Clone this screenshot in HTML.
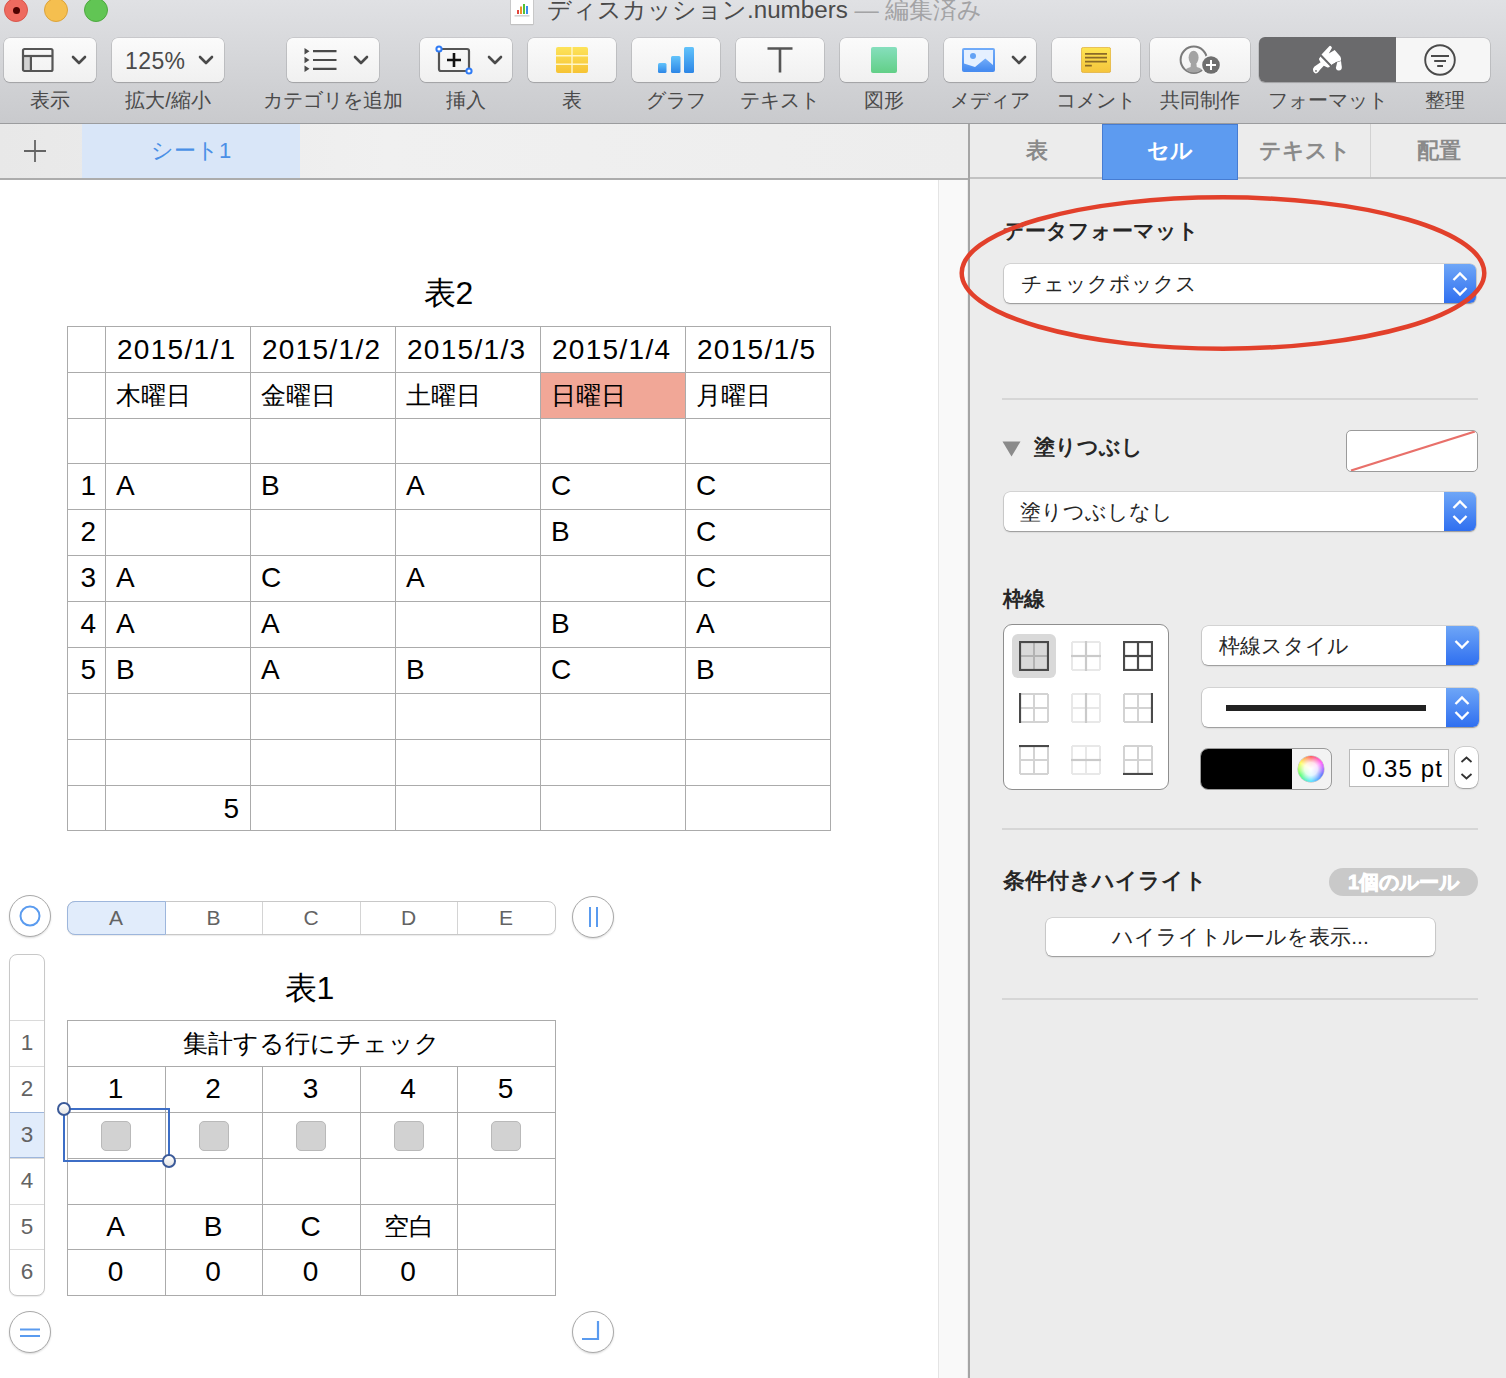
<!DOCTYPE html>
<html lang="ja">
<head>
<meta charset="utf-8">
<style>
*{box-sizing:border-box;margin:0;padding:0}
html,body{width:1506px;height:1378px;overflow:hidden;background:#fff;font-family:"Liberation Sans",sans-serif;color:#000}
.abs{position:absolute}
#toolbar{position:absolute;left:0;top:0;width:1506px;height:124px;background:linear-gradient(#e0e1e4,#c9cacd);border-bottom:1px solid #9b9c9e}
.tl{position:absolute;top:-2px;width:24px;height:24px;border-radius:50%}
.tb{position:absolute;top:38px;height:44px;border-radius:6px;background:linear-gradient(#fbfbfb,#f0f0f0);box-shadow:0 0 0 0.6px rgba(0,0,0,.16),0 1px 1px rgba(0,0,0,.16)}
.lbl{position:absolute;top:87px;font-size:20px;color:#4a4a4a;text-align:center;white-space:nowrap;line-height:26px}
.chev{position:absolute;width:16px;height:16px}
#tabbar{position:absolute;left:0;top:124px;width:969px;height:56px;background:linear-gradient(90deg,#e8e8e8,#f0f0f0 40%,#ededed);border-bottom:2px solid #acacac}
#side{position:absolute;left:968px;top:124px;width:538px;height:1254px;background:#ececec;border-left:2px solid #a5a5a5}
.stab{position:absolute;top:0;height:55px;font-size:22px;font-weight:bold;color:#8a8a8a;text-align:center;line-height:53px}
#canvas{position:absolute;left:0;top:180px;width:938px;height:1198px;background:#fff}
#scroll{position:absolute;left:938px;top:180px;width:30px;height:1198px;background:#f9f9f9;border-left:1px solid #e4e4e4;border-right:1px solid #ececec}
.sec{position:absolute;font-size:21.3px;font-weight:bold;color:#262626;white-space:nowrap}
.sep{position:absolute;left:1002px;width:476px;height:2px;background:#d6d6d6}
.pop{position:absolute;height:39px;background:#fff;border-radius:6px;box-shadow:0 0 0 0.5px rgba(0,0,0,.2),0 1px 1.5px rgba(0,0,0,.3);font-size:21px;color:#262626;line-height:39px;white-space:nowrap}
.popb{position:absolute;right:0;top:0;width:32px;height:39px;border-radius:0 6px 6px 0;background:linear-gradient(#6ea6f7,#2f6ff0)}
.c{position:absolute;white-space:nowrap;color:#000}
</style>
</head>
<body>

<div id="toolbar">
<div class="tl" style="left:4px;background:#ee6a5f;border:1px solid #d9574c"><div style="position:absolute;left:8px;top:8px;width:7px;height:7px;border-radius:50%;background:#4d0200"></div></div>
<div class="tl" style="left:44px;background:#f5bf4f;border:1px solid #dca33a"></div>
<div class="tl" style="left:84px;background:#61c554;border:1px solid #4ea940"></div>
<div class="abs" style="left:511px;top:-8px;width:22px;height:32px;background:#fff;box-shadow:0 0 0 0.8px #c4c4c4,0 1px 1px rgba(0,0,0,.15)">
<svg class="abs" style="left:3px;top:11px" width="16" height="14" viewBox="0 0 16 14"><rect x="3" y="7" width="2" height="4" fill="#e2463c"/><rect x="6" y="3.5" width="2" height="7.5" fill="#f0902a"/><rect x="9" y="1" width="2" height="10" fill="#52c23a"/><rect x="12" y="3" width="2" height="8" fill="#3a8ef0"/><rect x="0.5" y="12.5" width="15" height="0.8" fill="#aaa"/></svg></div>
<div class="abs" style="left:547px;top:-9px;font-size:24.2px;line-height:38px;color:#4b4b4b;white-space:nowrap">ディスカッション.numbers <span style="color:#a3a3a5">— 編集済み</span></div>
<div class="tb" style="left:4px;width:92px">
<svg class="abs" style="left:17px;top:9px" width="34" height="26" viewBox="0 0 34 26"><rect x="2" y="9" width="8.5" height="15" fill="#d2d2d2"/><rect x="2" y="2" width="29.5" height="22" rx="1.5" fill="none" stroke="#555" stroke-width="2.2"/><line x1="2" y1="9" x2="31.5" y2="9" stroke="#555" stroke-width="2.2"/><line x1="9.9" y1="9" x2="9.9" y2="24" stroke="#555" stroke-width="2.2"/></svg>
<svg class="chev" style="left:67px;top:14px" viewBox="0 0 16 16"><polyline points="2,5 8,11 14,5" fill="none" stroke="#4a4a4a" stroke-width="2.6" stroke-linecap="round" stroke-linejoin="round"/></svg></div>
<div class="lbl" style="left:0;width:100px">表示</div>
<div class="tb" style="left:112px;width:112px">
<div class="abs" style="left:13px;top:8px;font-size:23px;line-height:30px;color:#4a4a4a;letter-spacing:0.4px">125%</div>
<svg class="chev" style="left:86px;top:14px" viewBox="0 0 16 16"><polyline points="2,5 8,11 14,5" fill="none" stroke="#4a4a4a" stroke-width="2.6" stroke-linecap="round" stroke-linejoin="round"/></svg></div>
<div class="lbl" style="left:118px;width:100px">拡大/縮小</div>
<div class="tb" style="left:287px;width:92px">
<svg class="abs" style="left:16px;top:10px" width="36" height="24" viewBox="0 0 36 24"><path d="M1.5 0 L6.5 3.2 L1.5 6.4Z M1.5 8.8 L6.5 12 L1.5 15.2Z M1.5 17.6 L6.5 20.8 L1.5 24Z" fill="#4a4a4a"/><path d="M10 3.2H33.5M10 12H33.5M10 20.8H33.5" stroke="#4a4a4a" stroke-width="2.2"/></svg>
<svg class="chev" style="left:66px;top:14px" viewBox="0 0 16 16"><polyline points="2,5 8,11 14,5" fill="none" stroke="#4a4a4a" stroke-width="2.6" stroke-linecap="round" stroke-linejoin="round"/></svg></div>
<div class="lbl" style="left:233px;width:200px">カテゴリを追加</div>
<div class="tb" style="left:420px;width:92px">
<svg class="abs" style="left:15px;top:7px" width="40" height="32" viewBox="0 0 40 32"><rect x="4" y="4" width="30" height="22" rx="2" fill="none" stroke="#555" stroke-width="2.2"/><path d="M19 8V22M12 15H26" stroke="#111" stroke-width="2.6"/><circle cx="4" cy="4" r="2.6" fill="#fff" stroke="#2f7bf5" stroke-width="2"/><circle cx="34" cy="26" r="2.6" fill="#fff" stroke="#2f7bf5" stroke-width="2"/></svg>
<svg class="chev" style="left:67px;top:14px" viewBox="0 0 16 16"><polyline points="2,5 8,11 14,5" fill="none" stroke="#4a4a4a" stroke-width="2.6" stroke-linecap="round" stroke-linejoin="round"/></svg></div>
<div class="lbl" style="left:416px;width:100px">挿入</div>
<div class="tb" style="left:528px;width:88px">
<svg class="abs" style="left:28px;top:9px" width="32" height="26" viewBox="0 0 32 26"><defs><linearGradient id="gy" x1="0" y1="0" x2="0" y2="1"><stop offset="0" stop-color="#fde35a"/><stop offset="1" stop-color="#f6c334"/></linearGradient></defs><rect x="0" y="0" width="32" height="26" rx="2" fill="url(#gy)"/><path d="M16 0V26M0 8.7H32M0 17.3H32" stroke="#fff6c8" stroke-width="1.4"/></svg></div>
<div class="lbl" style="left:522px;width:100px">表</div>
<div class="tb" style="left:632px;width:88px">
<svg class="abs" style="left:26px;top:9px" width="36" height="26" viewBox="0 0 36 26"><defs><linearGradient id="gb" x1="0" y1="0" x2="0" y2="1"><stop offset="0" stop-color="#62c3fb"/><stop offset="1" stop-color="#2c86e6"/></linearGradient></defs><rect x="0" y="16" width="8.5" height="10" rx="1.5" fill="url(#gb)"/><rect x="13" y="9" width="9.5" height="17" rx="1.5" fill="url(#gb)"/><rect x="26" y="0" width="10" height="26" rx="1.5" fill="url(#gb)"/></svg></div>
<div class="lbl" style="left:626px;width:100px">グラフ</div>
<div class="tb" style="left:736px;width:88px">
<svg class="abs" style="left:31px;top:9px" width="26" height="26" viewBox="0 0 26 26"><path d="M0.5 1.5H25.5M13 1.5V25.5" stroke="#555" stroke-width="2.6"/></svg></div>
<div class="lbl" style="left:730px;width:100px">テキスト</div>
<div class="tb" style="left:840px;width:88px">
<svg class="abs" style="left:31px;top:9px" width="26" height="26" viewBox="0 0 26 26"><defs><linearGradient id="gg" x1="0" y1="0" x2="0" y2="1"><stop offset="0" stop-color="#86dfbd"/><stop offset="1" stop-color="#62cf87"/></linearGradient></defs><rect x="0" y="0" width="26" height="26" rx="2" fill="url(#gg)"/></svg></div>
<div class="lbl" style="left:834px;width:100px">図形</div>
<div class="tb" style="left:944px;width:92px">
<svg class="abs" style="left:18px;top:10px" width="34" height="26" viewBox="0 0 34 26"><defs><linearGradient id="gm" x1="0" y1="0" x2="0" y2="1"><stop offset="0" stop-color="#72acf9"/><stop offset="1" stop-color="#468bf0"/></linearGradient></defs><rect x="0" y="0" width="33" height="24" rx="2" fill="url(#gm)"/><rect x="2" y="2" width="29" height="19" fill="#e5f0ff"/><circle cx="11" cy="8" r="3" fill="#63a2f5"/><path d="M2 15.5 L13 19 L23.3 10.5 L31 17 V22 H2Z" fill="url(#gm)"/></svg>
<svg class="chev" style="left:67px;top:14px" viewBox="0 0 16 16"><polyline points="2,5 8,11 14,5" fill="none" stroke="#4a4a4a" stroke-width="2.6" stroke-linecap="round" stroke-linejoin="round"/></svg></div>
<div class="lbl" style="left:940px;width:100px">メディア</div>
<div class="tb" style="left:1052px;width:88px">
<svg class="abs" style="left:29px;top:9px" width="30" height="26" viewBox="0 0 30 26"><defs><linearGradient id="gc" x1="0" y1="0" x2="0" y2="1"><stop offset="0" stop-color="#fde552"/><stop offset="1" stop-color="#f5c43c"/></linearGradient></defs><rect x="0.4" y="0.4" width="29.3" height="25.2" rx="2" fill="url(#gc)" stroke="#e0ad3a" stroke-width="0.8"/><path d="M4 6.8H26M4 10.7H26M4 14.7H26M4 18.6H10.8" stroke="#8a6a28" stroke-width="1.8"/></svg></div>
<div class="lbl" style="left:1046px;width:100px">コメント</div>
<div class="tb" style="left:1150px;width:100px"></div>
<svg class="abs" style="left:1176px;top:42px" width="48" height="36" viewBox="0 0 48 36"><defs><clipPath id="cc"><circle cx="17.8" cy="17.8" r="12.6"/></clipPath></defs>
<circle cx="17.8" cy="17.8" r="13.2" fill="none" stroke="#7b7b7b" stroke-width="2"/>
<g clip-path="url(#cc)" fill="#a3a3a3"><ellipse cx="17.6" cy="15.6" rx="5" ry="6.8"/><path d="M15 20 L20.2 20 L20.8 25 Q27 26.5 29 31 L29 36 L6 36 L6 31 Q9 26.5 14.6 25Z"/></g>
<circle cx="35" cy="23" r="10.3" fill="#f5f5f5"/><circle cx="35" cy="23" r="8.8" fill="#6e6e6e"/><path d="M35 18V28M30 23H40" stroke="#fff" stroke-width="2"/></svg>
<div class="lbl" style="left:1150px;width:100px">共同制作</div>
<div class="tb" style="left:1259px;width:231px;background:#f6f6f6"></div>
<div class="abs" style="left:1259px;top:37px;width:137px;height:45px;border-radius:6px 0 0 6px;background:#6a6a6c"></div>
<svg class="abs" style="left:1300px;top:40px" width="60" height="40" viewBox="0 0 60 40">
<path d="M21.5 14.5 L29.5 6 Q30.8 5.2 32 7.8 L28.8 13.4 L34.7 10 L40.3 16.5 Q41.3 18.2 41 20.5 L36.3 22 L31.5 25.2 Z" fill="#fff"/>
<path d="M37.2 22.3 L41 21 L41.8 27 Q42 30.5 38.7 30.4 Q35.6 30.2 36 27.2 Z" fill="#fff"/>
<path d="M20.5 16.5 Q18.3 18.6 19.6 20.8 L20.6 22.3 L14.2 26.8 Q12.2 28.8 13.3 31.6 Q14.8 34.3 17.2 33 Q18.6 32 19.8 30 L23.8 25.8 L27.5 27.4 Q29.3 27.5 30 26.2 Z" fill="#fff"/>
<circle cx="16" cy="30.9" r="0.9" fill="#6a6a6c"/>
<path d="M21 15.8 L31 25.5" stroke="#6a6a6c" stroke-width="1.3"/>
<path d="M31.5 25.2 L37 22.2" stroke="#6a6a6c" stroke-width="0.9"/>
</svg>
<svg class="abs" style="left:1423px;top:43px" width="34" height="34" viewBox="0 0 34 34"><circle cx="17" cy="17" r="14.8" fill="none" stroke="#4a4a4a" stroke-width="1.9"/><path d="M8 13H26M11.2 18H23M14.2 23H20" stroke="#4a4a4a" stroke-width="2"/></svg>
<div class="lbl" style="left:1253px;width:150px">フォーマット</div>
<div class="lbl" style="left:1395px;width:100px">整理</div>
</div>
<div id="tabbar">
<svg class="abs" style="left:24px;top:16px" width="22" height="22" viewBox="0 0 22 22"><path d="M11 0V22M0 11H22" stroke="#646464" stroke-width="1.8"/></svg>
<div class="abs" style="left:82px;top:0;width:218px;height:54px;background:#d9e6f8"></div>
<div class="abs" style="left:82px;top:0;width:218px;height:54px;font-size:22px;line-height:54px;color:#4a8fe6;text-align:center">シート1</div>
</div>
<div id="side">
<div class="stab" style="left:0;width:134px">表</div>
<div class="stab" style="left:268px;width:134px">テキスト</div>
<div class="abs" style="left:400px;top:0;width:1px;height:53px;background:#d2d2d2"></div>
<div class="stab" style="left:401px;width:135px">配置</div>
<div class="abs" style="left:0;top:53px;width:536px;height:2px;background:#c2c2c2"></div>
<div class="abs" style="left:132px;top:0;width:136px;height:56px;background:#5d9bf0;border:1px solid #467cd2"></div>
<div class="stab" style="left:132px;width:136px;color:#fff">セル</div>
</div>
<div id="canvas"></div>
<div id="scroll"></div>
<div class="abs" style="left:540px;top:372px;width:145px;height:46px;background:#f1a797"></div>
<div class="abs" style="left:67px;top:326px;width:1px;height:505px;background:#ababab"></div>
<div class="abs" style="left:105px;top:326px;width:1px;height:505px;background:#ababab"></div>
<div class="abs" style="left:250px;top:326px;width:1px;height:505px;background:#ababab"></div>
<div class="abs" style="left:395px;top:326px;width:1px;height:505px;background:#ababab"></div>
<div class="abs" style="left:540px;top:326px;width:1px;height:505px;background:#ababab"></div>
<div class="abs" style="left:685px;top:326px;width:1px;height:505px;background:#ababab"></div>
<div class="abs" style="left:830px;top:326px;width:1px;height:505px;background:#ababab"></div>
<div class="abs" style="left:67px;top:326px;width:764px;height:1px;background:#ababab"></div>
<div class="abs" style="left:67px;top:372px;width:764px;height:1px;background:#ababab"></div>
<div class="abs" style="left:67px;top:418px;width:764px;height:1px;background:#ababab"></div>
<div class="abs" style="left:67px;top:463px;width:764px;height:1px;background:#ababab"></div>
<div class="abs" style="left:67px;top:509px;width:764px;height:1px;background:#ababab"></div>
<div class="abs" style="left:67px;top:555px;width:764px;height:1px;background:#ababab"></div>
<div class="abs" style="left:67px;top:601px;width:764px;height:1px;background:#ababab"></div>
<div class="abs" style="left:67px;top:647px;width:764px;height:1px;background:#ababab"></div>
<div class="abs" style="left:67px;top:693px;width:764px;height:1px;background:#ababab"></div>
<div class="abs" style="left:67px;top:739px;width:764px;height:1px;background:#ababab"></div>
<div class="abs" style="left:67px;top:785px;width:764px;height:1px;background:#ababab"></div>
<div class="abs" style="left:67px;top:830px;width:764px;height:1px;background:#ababab"></div>
<div class="c" style="left:105px;top:327px;width:145px;height:46px;line-height:46px;font-size:28px;color:#000;text-align:left;padding:0 12px;letter-spacing:0.9px;letter-spacing:1.3px">2015/1/1</div>
<div class="c" style="left:250px;top:327px;width:145px;height:46px;line-height:46px;font-size:28px;color:#000;text-align:left;padding:0 12px;letter-spacing:0.9px;letter-spacing:1.3px">2015/1/2</div>
<div class="c" style="left:395px;top:327px;width:145px;height:46px;line-height:46px;font-size:28px;color:#000;text-align:left;padding:0 12px;letter-spacing:0.9px;letter-spacing:1.3px">2015/1/3</div>
<div class="c" style="left:540px;top:327px;width:145px;height:46px;line-height:46px;font-size:28px;color:#000;text-align:left;padding:0 12px;letter-spacing:0.9px;letter-spacing:1.3px">2015/1/4</div>
<div class="c" style="left:685px;top:327px;width:145px;height:46px;line-height:46px;font-size:28px;color:#000;text-align:left;padding:0 12px;letter-spacing:0.9px;letter-spacing:1.3px">2015/1/5</div>
<div class="c" style="left:105px;top:372px;width:145px;height:46px;line-height:46px;font-size:25px;color:#000;text-align:left;padding:0 11px;">木曜日</div>
<div class="c" style="left:250px;top:372px;width:145px;height:46px;line-height:46px;font-size:25px;color:#000;text-align:left;padding:0 11px;">金曜日</div>
<div class="c" style="left:395px;top:372px;width:145px;height:46px;line-height:46px;font-size:25px;color:#000;text-align:left;padding:0 11px;">土曜日</div>
<div class="c" style="left:540px;top:372px;width:145px;height:46px;line-height:46px;font-size:25px;color:#000;text-align:left;padding:0 11px;">日曜日</div>
<div class="c" style="left:685px;top:372px;width:145px;height:46px;line-height:46px;font-size:25px;color:#000;text-align:left;padding:0 11px;">月曜日</div>
<div class="c" style="left:67px;top:463px;width:38px;height:46px;line-height:46px;font-size:28px;color:#000;text-align:right;padding:0 8px;letter-spacing:0.9px;">1</div>
<div class="c" style="left:105px;top:463px;width:145px;height:46px;line-height:46px;font-size:28px;color:#000;text-align:left;padding:0 11px;letter-spacing:0.9px;">A</div>
<div class="c" style="left:250px;top:463px;width:145px;height:46px;line-height:46px;font-size:28px;color:#000;text-align:left;padding:0 11px;letter-spacing:0.9px;">B</div>
<div class="c" style="left:395px;top:463px;width:145px;height:46px;line-height:46px;font-size:28px;color:#000;text-align:left;padding:0 11px;letter-spacing:0.9px;">A</div>
<div class="c" style="left:540px;top:463px;width:145px;height:46px;line-height:46px;font-size:28px;color:#000;text-align:left;padding:0 11px;letter-spacing:0.9px;">C</div>
<div class="c" style="left:685px;top:463px;width:145px;height:46px;line-height:46px;font-size:28px;color:#000;text-align:left;padding:0 11px;letter-spacing:0.9px;">C</div>
<div class="c" style="left:67px;top:509px;width:38px;height:46px;line-height:46px;font-size:28px;color:#000;text-align:right;padding:0 8px;letter-spacing:0.9px;">2</div>
<div class="c" style="left:540px;top:509px;width:145px;height:46px;line-height:46px;font-size:28px;color:#000;text-align:left;padding:0 11px;letter-spacing:0.9px;">B</div>
<div class="c" style="left:685px;top:509px;width:145px;height:46px;line-height:46px;font-size:28px;color:#000;text-align:left;padding:0 11px;letter-spacing:0.9px;">C</div>
<div class="c" style="left:67px;top:555px;width:38px;height:46px;line-height:46px;font-size:28px;color:#000;text-align:right;padding:0 8px;letter-spacing:0.9px;">3</div>
<div class="c" style="left:105px;top:555px;width:145px;height:46px;line-height:46px;font-size:28px;color:#000;text-align:left;padding:0 11px;letter-spacing:0.9px;">A</div>
<div class="c" style="left:250px;top:555px;width:145px;height:46px;line-height:46px;font-size:28px;color:#000;text-align:left;padding:0 11px;letter-spacing:0.9px;">C</div>
<div class="c" style="left:395px;top:555px;width:145px;height:46px;line-height:46px;font-size:28px;color:#000;text-align:left;padding:0 11px;letter-spacing:0.9px;">A</div>
<div class="c" style="left:685px;top:555px;width:145px;height:46px;line-height:46px;font-size:28px;color:#000;text-align:left;padding:0 11px;letter-spacing:0.9px;">C</div>
<div class="c" style="left:67px;top:601px;width:38px;height:46px;line-height:46px;font-size:28px;color:#000;text-align:right;padding:0 8px;letter-spacing:0.9px;">4</div>
<div class="c" style="left:105px;top:601px;width:145px;height:46px;line-height:46px;font-size:28px;color:#000;text-align:left;padding:0 11px;letter-spacing:0.9px;">A</div>
<div class="c" style="left:250px;top:601px;width:145px;height:46px;line-height:46px;font-size:28px;color:#000;text-align:left;padding:0 11px;letter-spacing:0.9px;">A</div>
<div class="c" style="left:540px;top:601px;width:145px;height:46px;line-height:46px;font-size:28px;color:#000;text-align:left;padding:0 11px;letter-spacing:0.9px;">B</div>
<div class="c" style="left:685px;top:601px;width:145px;height:46px;line-height:46px;font-size:28px;color:#000;text-align:left;padding:0 11px;letter-spacing:0.9px;">A</div>
<div class="c" style="left:67px;top:647px;width:38px;height:46px;line-height:46px;font-size:28px;color:#000;text-align:right;padding:0 8px;letter-spacing:0.9px;">5</div>
<div class="c" style="left:105px;top:647px;width:145px;height:46px;line-height:46px;font-size:28px;color:#000;text-align:left;padding:0 11px;letter-spacing:0.9px;">B</div>
<div class="c" style="left:250px;top:647px;width:145px;height:46px;line-height:46px;font-size:28px;color:#000;text-align:left;padding:0 11px;letter-spacing:0.9px;">A</div>
<div class="c" style="left:395px;top:647px;width:145px;height:46px;line-height:46px;font-size:28px;color:#000;text-align:left;padding:0 11px;letter-spacing:0.9px;">B</div>
<div class="c" style="left:540px;top:647px;width:145px;height:46px;line-height:46px;font-size:28px;color:#000;text-align:left;padding:0 11px;letter-spacing:0.9px;">C</div>
<div class="c" style="left:685px;top:647px;width:145px;height:46px;line-height:46px;font-size:28px;color:#000;text-align:left;padding:0 11px;letter-spacing:0.9px;">B</div>
<div class="c" style="left:105px;top:786px;width:145px;height:45px;line-height:45px;font-size:28px;color:#000;text-align:right;padding:0 10px;letter-spacing:0.9px;">5</div>
<div class="c" style="left:67px;top:270px;width:763px;height:46px;line-height:46px;font-size:32px;color:#000;text-align:center;padding:0 0px;">表2</div>
<div class="abs" style="left:67px;top:901px;width:489px;height:34px;border:1px solid #c8c8c8;border-radius:8px;background:#fff;box-shadow:0 1px 1px rgba(0,0,0,.08)"></div>
<div class="abs" style="left:67px;top:901px;width:99px;height:34px;border:1px solid #9db6dc;border-radius:8px 0 0 8px;background:#e1ecfb"></div>
<div class="abs" style="left:262px;top:902px;width:1px;height:32px;background:#d4d4d4"></div>
<div class="abs" style="left:360px;top:902px;width:1px;height:32px;background:#d4d4d4"></div>
<div class="abs" style="left:457px;top:902px;width:1px;height:32px;background:#d4d4d4"></div>
<div class="c" style="left:67px;top:901px;width:98px;height:34px;line-height:34px;font-size:21px;color:#636363;text-align:center;padding:0 0px;letter-spacing:0.9px;letter-spacing:0">A</div>
<div class="c" style="left:165px;top:901px;width:97px;height:34px;line-height:34px;font-size:21px;color:#636363;text-align:center;padding:0 0px;letter-spacing:0.9px;letter-spacing:0">B</div>
<div class="c" style="left:262px;top:901px;width:98px;height:34px;line-height:34px;font-size:21px;color:#636363;text-align:center;padding:0 0px;letter-spacing:0.9px;letter-spacing:0">C</div>
<div class="c" style="left:360px;top:901px;width:97px;height:34px;line-height:34px;font-size:21px;color:#636363;text-align:center;padding:0 0px;letter-spacing:0.9px;letter-spacing:0">D</div>
<div class="c" style="left:457px;top:901px;width:98px;height:34px;line-height:34px;font-size:21px;color:#636363;text-align:center;padding:0 0px;letter-spacing:0.9px;letter-spacing:0">E</div>
<div class="abs" style="left:9px;top:954px;width:36px;height:342px;border:1px solid #c8c8c8;border-radius:8px;background:#fff;box-shadow:0 1px 1px rgba(0,0,0,.08)"></div>
<div class="abs" style="left:10px;top:1112px;width:34px;height:46px;background:#e1ecfb;border-top:1px solid #9db6dc;border-bottom:1px solid #9db6dc"></div>
<div class="abs" style="left:10px;top:1020px;width:34px;height:1px;background:#dadada"></div>
<div class="abs" style="left:10px;top:1066px;width:34px;height:1px;background:#dadada"></div>
<div class="abs" style="left:10px;top:1158px;width:34px;height:1px;background:#dadada"></div>
<div class="abs" style="left:10px;top:1204px;width:34px;height:1px;background:#dadada"></div>
<div class="abs" style="left:10px;top:1249px;width:34px;height:1px;background:#dadada"></div>
<div class="c" style="left:9px;top:1020px;width:36px;height:46px;line-height:46px;font-size:22.5px;color:#636363;text-align:center;padding:0 0px;letter-spacing:0.9px;letter-spacing:0">1</div>
<div class="c" style="left:9px;top:1066px;width:36px;height:46px;line-height:46px;font-size:22.5px;color:#636363;text-align:center;padding:0 0px;letter-spacing:0.9px;letter-spacing:0">2</div>
<div class="c" style="left:9px;top:1112px;width:36px;height:46px;line-height:46px;font-size:22.5px;color:#636363;text-align:center;padding:0 0px;letter-spacing:0.9px;letter-spacing:0">3</div>
<div class="c" style="left:9px;top:1158px;width:36px;height:46px;line-height:46px;font-size:22.5px;color:#636363;text-align:center;padding:0 0px;letter-spacing:0.9px;letter-spacing:0">4</div>
<div class="c" style="left:9px;top:1204px;width:36px;height:45px;line-height:45px;font-size:22.5px;color:#636363;text-align:center;padding:0 0px;letter-spacing:0.9px;letter-spacing:0">5</div>
<div class="c" style="left:9px;top:1249px;width:36px;height:46px;line-height:46px;font-size:22.5px;color:#636363;text-align:center;padding:0 0px;letter-spacing:0.9px;letter-spacing:0">6</div>
<div class="abs" style="left:67px;top:1020px;width:1px;height:276px;background:#ababab"></div>
<div class="abs" style="left:165px;top:1066px;width:1px;height:230px;background:#ababab"></div>
<div class="abs" style="left:262px;top:1066px;width:1px;height:230px;background:#ababab"></div>
<div class="abs" style="left:360px;top:1066px;width:1px;height:230px;background:#ababab"></div>
<div class="abs" style="left:457px;top:1066px;width:1px;height:230px;background:#ababab"></div>
<div class="abs" style="left:555px;top:1020px;width:1px;height:276px;background:#ababab"></div>
<div class="abs" style="left:67px;top:1020px;width:489px;height:1px;background:#ababab"></div>
<div class="abs" style="left:67px;top:1066px;width:489px;height:1px;background:#ababab"></div>
<div class="abs" style="left:67px;top:1112px;width:489px;height:1px;background:#ababab"></div>
<div class="abs" style="left:67px;top:1158px;width:489px;height:1px;background:#ababab"></div>
<div class="abs" style="left:67px;top:1204px;width:489px;height:1px;background:#ababab"></div>
<div class="abs" style="left:67px;top:1249px;width:489px;height:1px;background:#ababab"></div>
<div class="abs" style="left:67px;top:1295px;width:489px;height:1px;background:#ababab"></div>
<div class="c" style="left:65px;top:965px;width:489px;height:46px;line-height:46px;font-size:32px;color:#000;text-align:center;padding:0 0px;">表1</div>
<div class="c" style="left:67px;top:1020px;width:488px;height:46px;line-height:46px;font-size:25px;color:#000;text-align:center;padding:0 0px;">集計する行にチェック</div>
<div class="c" style="left:67px;top:1066px;width:98px;height:46px;line-height:46px;font-size:28px;color:#000;text-align:center;padding:0 0px;letter-spacing:0.9px;">1</div>
<div class="c" style="left:165px;top:1066px;width:97px;height:46px;line-height:46px;font-size:28px;color:#000;text-align:center;padding:0 0px;letter-spacing:0.9px;">2</div>
<div class="c" style="left:262px;top:1066px;width:98px;height:46px;line-height:46px;font-size:28px;color:#000;text-align:center;padding:0 0px;letter-spacing:0.9px;">3</div>
<div class="c" style="left:360px;top:1066px;width:97px;height:46px;line-height:46px;font-size:28px;color:#000;text-align:center;padding:0 0px;letter-spacing:0.9px;">4</div>
<div class="c" style="left:457px;top:1066px;width:98px;height:46px;line-height:46px;font-size:28px;color:#000;text-align:center;padding:0 0px;letter-spacing:0.9px;">5</div>
<div class="c" style="left:67px;top:1204px;width:98px;height:45px;line-height:45px;font-size:28px;color:#000;text-align:center;padding:0 0px;letter-spacing:0.9px;">A</div>
<div class="c" style="left:165px;top:1204px;width:97px;height:45px;line-height:45px;font-size:28px;color:#000;text-align:center;padding:0 0px;letter-spacing:0.9px;">B</div>
<div class="c" style="left:262px;top:1204px;width:98px;height:45px;line-height:45px;font-size:28px;color:#000;text-align:center;padding:0 0px;letter-spacing:0.9px;">C</div>
<div class="c" style="left:360px;top:1204px;width:97px;height:45px;line-height:45px;font-size:25px;color:#000;text-align:center;padding:0 0px;">空白</div>
<div class="c" style="left:67px;top:1249px;width:98px;height:46px;line-height:46px;font-size:28px;color:#000;text-align:center;padding:0 0px;letter-spacing:0.9px;">0</div>
<div class="c" style="left:165px;top:1249px;width:97px;height:46px;line-height:46px;font-size:28px;color:#000;text-align:center;padding:0 0px;letter-spacing:0.9px;">0</div>
<div class="c" style="left:262px;top:1249px;width:98px;height:46px;line-height:46px;font-size:28px;color:#000;text-align:center;padding:0 0px;letter-spacing:0.9px;">0</div>
<div class="c" style="left:360px;top:1249px;width:97px;height:46px;line-height:46px;font-size:28px;color:#000;text-align:center;padding:0 0px;letter-spacing:0.9px;">0</div>
<div class="abs" style="left:101.0px;top:1121px;width:30px;height:30px;border-radius:5px;background:#d2d2d2;border:1px solid #b9b9b9"></div>
<div class="abs" style="left:198.5px;top:1121px;width:30px;height:30px;border-radius:5px;background:#d2d2d2;border:1px solid #b9b9b9"></div>
<div class="abs" style="left:296.0px;top:1121px;width:30px;height:30px;border-radius:5px;background:#d2d2d2;border:1px solid #b9b9b9"></div>
<div class="abs" style="left:393.5px;top:1121px;width:30px;height:30px;border-radius:5px;background:#d2d2d2;border:1px solid #b9b9b9"></div>
<div class="abs" style="left:491.0px;top:1121px;width:30px;height:30px;border-radius:5px;background:#d2d2d2;border:1px solid #b9b9b9"></div>
<div class="abs" style="left:63px;top:1108px;width:107px;height:54px;border:2px solid #3d6ec6"></div>
<div class="abs" style="left:57px;top:1102px;width:14px;height:14px;border-radius:50%;background:linear-gradient(#fff,#e4e4e4);border:2px solid #3b5a99"></div>
<div class="abs" style="left:162px;top:1154px;width:14px;height:14px;border-radius:50%;background:linear-gradient(#fff,#e4e4e4);border:2px solid #3b5a99"></div>
<div class="abs" style="left:9px;top:895px;width:42px;height:42px;border-radius:50%;background:#fff;border:1.5px solid #a9a9a9;box-shadow:0 1px 2px rgba(0,0,0,.15)"><svg class="abs" style="left:9px;top:9px" width="22" height="22"><circle cx="11" cy="11" r="9.5" fill="none" stroke="#5a9bef" stroke-width="2"/></svg></div>
<div class="abs" style="left:572px;top:896px;width:42px;height:42px;border-radius:50%;background:#fff;border:1.5px solid #a9a9a9;box-shadow:0 1px 2px rgba(0,0,0,.15)"><svg class="abs" style="left:9px;top:9px" width="22" height="22"><path d="M8 1V21M15 1V21" stroke="#5a9bef" stroke-width="2"/></svg></div>
<div class="abs" style="left:9px;top:1311px;width:42px;height:42px;border-radius:50%;background:#fff;border:1.5px solid #a9a9a9;box-shadow:0 1px 2px rgba(0,0,0,.15)"><svg class="abs" style="left:9px;top:9px" width="22" height="22"><path d="M1 8.5H21M1 15H21" stroke="#5a9bef" stroke-width="2"/></svg></div>
<div class="abs" style="left:572px;top:1311px;width:42px;height:42px;border-radius:50%;background:#fff;border:1.5px solid #a9a9a9;box-shadow:0 1px 2px rgba(0,0,0,.15)"><svg class="abs" style="left:9px;top:9px" width="22" height="22"><polyline points="0,18 16,18 16,0" fill="none" stroke="#5a9bef" stroke-width="2.2"/></svg></div>
<div class="sec" style="left:1003px;top:216px;line-height:30px">データフォーマット</div>
<div class="pop" style="left:1004px;top:264px;width:472px"><span style="position:absolute;left:17px">チェックボックス</span><div class="popb"><svg class="abs" style="left:7px;top:7px" width="18" height="26" viewBox="0 0 18 26"><polyline points="2.5,9 9,2.5 15.5,9" fill="none" stroke="#fff" stroke-width="2.4"/><polyline points="2.5,17 9,23.5 15.5,17" fill="none" stroke="#fff" stroke-width="2.4"/></svg></div></div>
<div class="sep" style="top:398px"></div>
<svg class="abs" style="left:1002px;top:441px" width="19" height="16" viewBox="0 0 19 16"><path d="M0.5 0.5H18.5L9.5 15.5Z" fill="#8a8a8a"/></svg>
<div class="sec" style="left:1034px;top:432px;line-height:30px">塗りつぶし</div>
<div class="abs" style="left:1346px;top:430px;width:132px;height:42px;border-radius:5px;background:#fff;border:1px solid #9b9b9b;overflow:hidden"><svg class="abs" style="left:0;top:0" width="130" height="40"><line x1="4" y1="39.5" x2="128" y2="0.5" stroke="#e8706a" stroke-width="2.2"/></svg></div>
<div class="pop" style="left:1004px;top:492px;width:472px"><span style="position:absolute;left:16px">塗りつぶしなし</span><div class="popb"><svg class="abs" style="left:7px;top:7px" width="18" height="26" viewBox="0 0 18 26"><polyline points="2.5,9 9,2.5 15.5,9" fill="none" stroke="#fff" stroke-width="2.4"/><polyline points="2.5,17 9,23.5 15.5,17" fill="none" stroke="#fff" stroke-width="2.4"/></svg></div></div>
<div class="sec" style="left:1003px;top:584px;line-height:30px">枠線</div>
<div class="abs" style="left:1003px;top:624px;width:166px;height:166px;border-radius:9px;background:#fff;border:1.5px solid #8e8e8e"></div>
<div class="abs" style="left:1012px;top:634px;width:44px;height:44px;border-radius:6px;background:#d9d9d9"></div>
<svg class="abs" style="left:1019px;top:641px" width="30" height="30" viewBox="0 0 30 30"><rect x="1.5" y="1.5" width="27" height="27" fill="#d9d9d9"/><path d="M15 1V29" stroke="#b3b3b3" stroke-width="2"/><path d="M1 15H29" stroke="#b3b3b3" stroke-width="2"/><path d="M1 1V29" stroke="#4a4a4a" stroke-width="2.2" stroke-linecap="square"/><path d="M29 1V29" stroke="#4a4a4a" stroke-width="2.2" stroke-linecap="square"/><path d="M1 1H29" stroke="#4a4a4a" stroke-width="2.2" stroke-linecap="square"/><path d="M1 29H29" stroke="#4a4a4a" stroke-width="2.2" stroke-linecap="square"/></svg>
<svg class="abs" style="left:1071px;top:641px" width="30" height="30" viewBox="0 0 30 30"><path d="M1 1V29" stroke="#e8e8e8" stroke-width="2"/><path d="M29 1V29" stroke="#e8e8e8" stroke-width="2"/><path d="M1 1H29" stroke="#e8e8e8" stroke-width="2"/><path d="M1 29H29" stroke="#e8e8e8" stroke-width="2"/><path d="M15 1V29" stroke="#cacaca" stroke-width="2.2" stroke-linecap="square"/><path d="M1 15H29" stroke="#cacaca" stroke-width="2.2" stroke-linecap="square"/></svg>
<svg class="abs" style="left:1123px;top:641px" width="30" height="30" viewBox="0 0 30 30"><path d="M1 1V29" stroke="#4a4a4a" stroke-width="2.2" stroke-linecap="square"/><path d="M29 1V29" stroke="#4a4a4a" stroke-width="2.2" stroke-linecap="square"/><path d="M1 1H29" stroke="#4a4a4a" stroke-width="2.2" stroke-linecap="square"/><path d="M1 29H29" stroke="#4a4a4a" stroke-width="2.2" stroke-linecap="square"/><path d="M15 1V29" stroke="#4a4a4a" stroke-width="2.2" stroke-linecap="square"/><path d="M1 15H29" stroke="#4a4a4a" stroke-width="2.2" stroke-linecap="square"/></svg>
<svg class="abs" style="left:1019px;top:693px" width="30" height="30" viewBox="0 0 30 30"><path d="M29 1V29" stroke="#d3d3d3" stroke-width="2"/><path d="M1 1H29" stroke="#d3d3d3" stroke-width="2"/><path d="M1 29H29" stroke="#d3d3d3" stroke-width="2"/><path d="M15 1V29" stroke="#d3d3d3" stroke-width="2"/><path d="M1 15H29" stroke="#d3d3d3" stroke-width="2"/><path d="M1 1V29" stroke="#4a4a4a" stroke-width="2.2" stroke-linecap="square"/></svg>
<svg class="abs" style="left:1071px;top:693px" width="30" height="30" viewBox="0 0 30 30"><path d="M1 1V29" stroke="#e8e8e8" stroke-width="2"/><path d="M29 1V29" stroke="#e8e8e8" stroke-width="2"/><path d="M1 1H29" stroke="#e8e8e8" stroke-width="2"/><path d="M1 29H29" stroke="#e8e8e8" stroke-width="2"/><path d="M1 15H29" stroke="#e8e8e8" stroke-width="2"/><path d="M15 1V29" stroke="#cacaca" stroke-width="2.2" stroke-linecap="square"/></svg>
<svg class="abs" style="left:1123px;top:693px" width="30" height="30" viewBox="0 0 30 30"><path d="M1 1V29" stroke="#d3d3d3" stroke-width="2"/><path d="M1 1H29" stroke="#d3d3d3" stroke-width="2"/><path d="M1 29H29" stroke="#d3d3d3" stroke-width="2"/><path d="M15 1V29" stroke="#d3d3d3" stroke-width="2"/><path d="M1 15H29" stroke="#d3d3d3" stroke-width="2"/><path d="M29 1V29" stroke="#4a4a4a" stroke-width="2.2" stroke-linecap="square"/></svg>
<svg class="abs" style="left:1019px;top:745px" width="30" height="30" viewBox="0 0 30 30"><path d="M1 1V29" stroke="#d3d3d3" stroke-width="2"/><path d="M29 1V29" stroke="#d3d3d3" stroke-width="2"/><path d="M1 29H29" stroke="#d3d3d3" stroke-width="2"/><path d="M15 1V29" stroke="#d3d3d3" stroke-width="2"/><path d="M1 15H29" stroke="#d3d3d3" stroke-width="2"/><path d="M1 1H29" stroke="#4a4a4a" stroke-width="2.2" stroke-linecap="square"/></svg>
<svg class="abs" style="left:1071px;top:745px" width="30" height="30" viewBox="0 0 30 30"><path d="M1 1V29" stroke="#e8e8e8" stroke-width="2"/><path d="M29 1V29" stroke="#e8e8e8" stroke-width="2"/><path d="M1 1H29" stroke="#e8e8e8" stroke-width="2"/><path d="M1 29H29" stroke="#e8e8e8" stroke-width="2"/><path d="M15 1V29" stroke="#e8e8e8" stroke-width="2"/><path d="M1 15H29" stroke="#cacaca" stroke-width="2.2" stroke-linecap="square"/></svg>
<svg class="abs" style="left:1123px;top:745px" width="30" height="30" viewBox="0 0 30 30"><path d="M1 1V29" stroke="#d3d3d3" stroke-width="2"/><path d="M29 1V29" stroke="#d3d3d3" stroke-width="2"/><path d="M1 1H29" stroke="#d3d3d3" stroke-width="2"/><path d="M15 1V29" stroke="#d3d3d3" stroke-width="2"/><path d="M1 15H29" stroke="#d3d3d3" stroke-width="2"/><path d="M1 29H29" stroke="#4a4a4a" stroke-width="2.2" stroke-linecap="square"/></svg>
<div class="pop" style="left:1202px;top:626px;width:277px"><span style="position:absolute;left:17px">枠線スタイル</span><div class="popb" style="width:33px"><svg class="abs" style="left:7px;top:12px" width="18" height="14" viewBox="0 0 18 14"><polyline points="2.5,3 9,9.5 15.5,3" fill="none" stroke="#fff" stroke-width="2.4"/></svg></div></div>
<div class="pop" style="left:1202px;top:688px;width:277px"><div class="abs" style="left:24px;top:17px;width:200px;height:6px;background:#222"></div><div class="popb" style="width:33px"><svg class="abs" style="left:7px;top:7px" width="18" height="26" viewBox="0 0 18 26"><polyline points="2.5,9 9,2.5 15.5,9" fill="none" stroke="#fff" stroke-width="2.4"/><polyline points="2.5,17 9,23.5 15.5,17" fill="none" stroke="#fff" stroke-width="2.4"/></svg></div></div>
<div class="abs" style="left:1200px;top:748px;width:132px;height:42px;border-radius:8px;background:#f3f3f3;border:1px solid #9a9a9a;overflow:hidden"><div class="abs" style="left:-1px;top:-1px;width:92px;height:42px;background:#000"></div>
<div class="abs" style="left:97px;top:7px;width:26px;height:26px;border-radius:50%;background:conic-gradient(from 0deg,#ff4040,#ff40ff,#4060ff,#40e0ff,#40ff60,#ffff40,#ff4040);box-shadow:0 0 0 0.5px rgba(0,0,0,.25)"><div class="abs" style="left:0;top:0;width:26px;height:26px;border-radius:50%;background:radial-gradient(circle,#fff 0%,rgba(255,255,255,.85) 35%,rgba(255,255,255,0) 75%)"></div></div></div>
<div class="abs" style="left:1349px;top:749px;width:100px;height:38px;background:#fff;border:1px solid #b9b9b9;font-size:24px;line-height:37px;text-align:right;padding-right:5px;color:#000;letter-spacing:1.1px">0.35 pt</div>
<div class="abs" style="left:1455px;top:747px;width:23px;height:41px;border-radius:8px;background:#fff;box-shadow:0 0 0 0.5px rgba(0,0,0,.25),0 1px 1.5px rgba(0,0,0,.25)"><svg class="abs" style="left:5px;top:9px" width="13" height="24" viewBox="0 0 13 24"><polyline points="1.5,6 6.5,1.5 11.5,6" fill="none" stroke="#333" stroke-width="1.8"/><polyline points="1.5,18 6.5,22.5 11.5,18" fill="none" stroke="#333" stroke-width="1.8"/></svg></div>
<div class="sep" style="top:828px"></div>
<div class="sec" style="left:1003px;top:866px;line-height:30px;font-size:21.6px">条件付きハイライト</div>
<div class="abs" style="left:1329px;top:868px;width:149px;height:28px;border-radius:14px;background:#c9c9c9;color:#fff;font-size:20px;font-weight:bold;line-height:28px;text-align:center;-webkit-text-stroke:0.8px #fff">1個のルール</div>
<div class="pop" style="left:1046px;top:918px;width:389px;height:38px;line-height:38px;text-align:center">ハイライトルールを表示...</div>
<div class="sep" style="top:998px"></div>
<svg class="abs" style="left:0;top:0;pointer-events:none" width="1506" height="1378"><ellipse cx="1223" cy="273" rx="261.3" ry="75.7" fill="none" stroke="#e2402b" stroke-width="4.5"/></svg>
</body>
</html>
